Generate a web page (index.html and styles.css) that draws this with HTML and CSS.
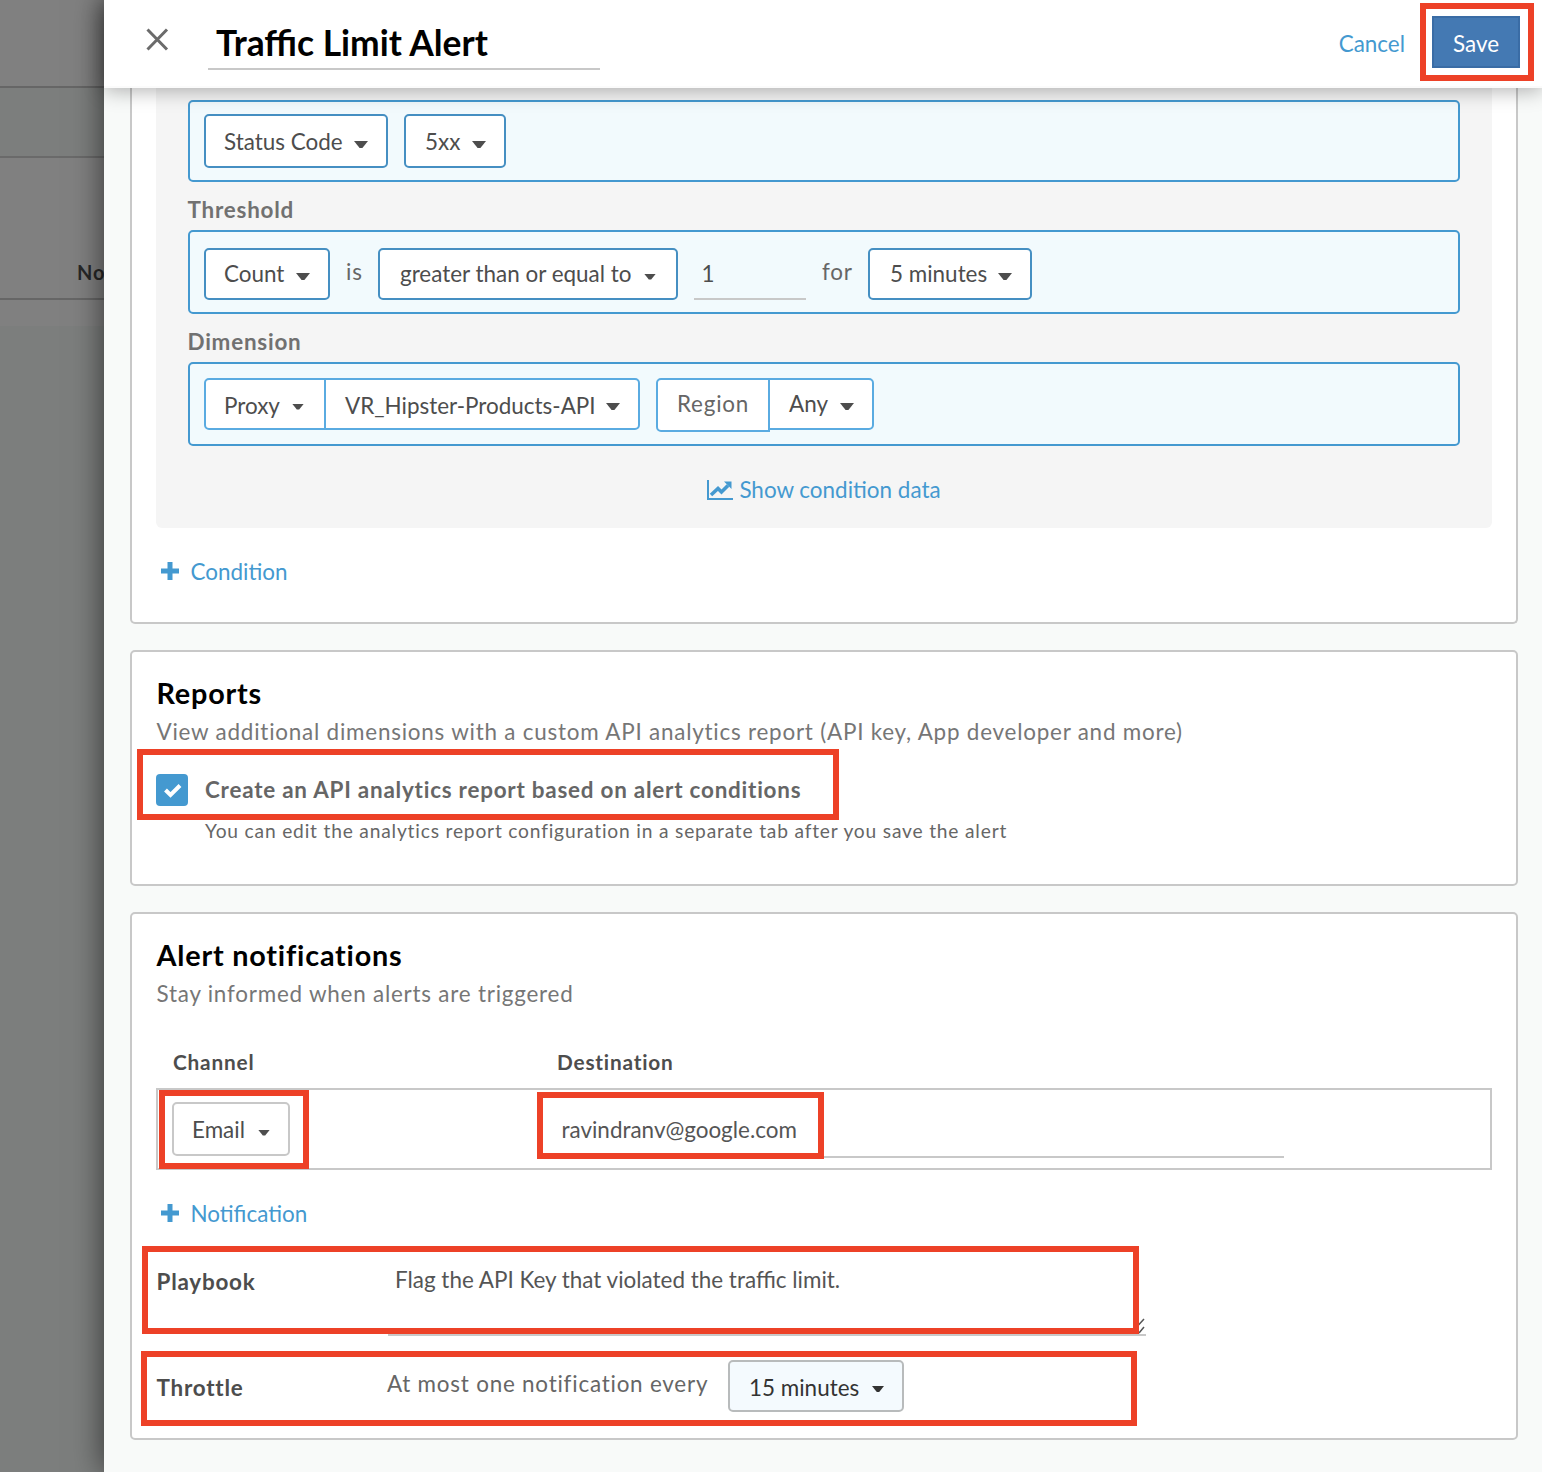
FILE: index.html
```html
<!DOCTYPE html>
<html lang="en">
<head>
<meta charset="utf-8">
<title>Traffic Limit Alert</title>
<link rel="stylesheet" href="styles.css">
</head>
<body>
<div class="app">
  <aside class="backdrop">
    <div class="backdrop-top"></div>
    <div class="backdrop-bar"></div>
    <div class="backdrop-head">No</div>
    <div class="backdrop-row"></div>
  </aside>
  <main class="panel">
    <header class="header">
      <svg class="close" viewBox="0 0 24 26"><path d="M2.500 3.500 22 23.500M22 3.500 2.500 23.500"/></svg>
      <div class="title">Traffic Limit Alert</div>
      <a class="cancel">Cancel</a>
      <button class="save">Save</button>
    </header>
    <div class="content">
      <section class="card conditions">
        <div class="condition">
          <div class="field field-metric">
            <div class="select w-status">Status Code<i class="caret"></i></div>
            <div class="select w-code">5xx<i class="caret"></i></div>
          </div>
          <div class="label">Threshold</div>
          <div class="field">
            <div class="select w-count">Count<i class="caret"></i></div>
            <span class="word w-is">is</span>
            <div class="select w-compare">greater than or equal to<i class="caret small"></i></div>
            <div class="number">1</div>
            <span class="word w-for">for</span>
            <div class="select w-duration">5 minutes<i class="caret"></i></div>
          </div>
          <div class="label">Dimension</div>
          <div class="field field-dimension">
            <div class="group">
              <div class="select w-proxy low">Proxy<i class="caret small"></i></div>
              <div class="select w-name low">VR_Hipster-Products-API<i class="caret"></i></div>
            </div>
            <div class="group">
              <div class="select region">Region</div>
              <div class="select w-any">Any<i class="caret"></i></div>
            </div>
          </div>
          <a class="show-data">
            <svg class="chart" viewBox="0 0 26 20"><path class="axis" d="M1 0V19H26"/><path class="trend" d="M4 15 11 8.500 14.500 12 21 5.500"/><path class="head" d="M17 1.500H24.500V9Z"/></svg>
            <span>Show condition data</span>
          </a>
        </div>
        <a class="add add-condition"><svg class="plus" viewBox="0 0 18 18"><path d="M9 0V18M0 9H18"/></svg>Condition</a>
      </section>

      <section class="card reports">
        <h2>Reports</h2>
        <p class="sub">View additional dimensions with a custom API analytics report (API key, App developer and more)</p>
        <div class="check-row">
          <span class="checkbox"><svg viewBox="0 0 32 32"><path d="M9.500 16 14.500 21 24 11.500"/></svg></span>
          <span>Create an API analytics report based on alert conditions</span>
        </div>
        <p class="hint">You can edit the analytics report configuration in a separate tab after you save the alert</p>
      </section>

      <section class="card alerts">
        <h2>Alert notifications</h2>
        <p class="sub">Stay informed when alerts are triggered</p>
        <div class="table-head"><span>Channel</span><span>Destination</span></div>
        <div class="table-row">
          <div class="select w-email">Email<i class="caret small"></i></div>
          <div class="email">ravindranv@google.com</div>
        </div>
        <a class="add"><svg class="plus" viewBox="0 0 18 18"><path d="M9 0V18M0 9H18"/></svg>Notification</a>
        <div class="form-row playbook">
          <b>Playbook</b>
          <div class="textarea">Flag the API Key that violated the traffic limit.
            <svg class="grip" viewBox="0 0 14 16"><path d="M1 13 12 1M7 15 12 9"/></svg>
          </div>
        </div>
        <div class="form-row throttle">
          <b>Throttle</b>
          <span class="every">At most one notification every</span>
          <div class="select w-throttle">15 minutes<i class="caret small"></i></div>
        </div>
      </section>
    </div>
  </main>
</div>
<div class="mark mark-save"></div>
<div class="mark mark-report"></div>
<div class="mark mark-channel"></div>
<div class="mark mark-email"></div>
<div class="mark mark-playbook"></div>
<div class="mark mark-throttle"></div>
</body>
</html>
```

FILE: styles.css
```css
* { box-sizing: border-box; }
body {
  margin: 0;
  font-family: Lato, "Open Sans", sans-serif;
  font-size: 22.45px;
  line-height: 32px;
  color: #4d4d4d;
  position: relative;
}
h2, p { margin: 0; }
svg { display: block; fill: none; flex: none; }
.app { display: grid; grid-template-columns: 104px 1438px; height: 1472px; overflow: hidden; }

/* dimmed page behind the panel */
.backdrop { background: #7c7e7d; }
.backdrop-top { height: 88px; background: #808080; border-bottom: 2px solid #666; }
.backdrop-bar { height: 70px; border-bottom: 2px solid #6a6a6a; }
.backdrop-head {
  height: 142px; padding: 98px 0 0 77px; background: #808080; border-bottom: 2px solid #666;
  color: #272727; font-weight: 700; font-size: 20px; letter-spacing: 1px;
}
.backdrop-row { height: 26px; background: #808080; }

.panel { background: #f8faf9; box-shadow: 0 0 30px rgba(0,0,0,.6); position: relative; min-width: 0; }
.header {
  height: 88px; display: flex; align-items: flex-start; background: #fff;
  border-bottom: 2px solid #fbfbfb; box-shadow: 0 2px 20px rgba(0,0,0,.33); position: relative; z-index: 1;
}
.close { width: 24px; height: 26px; margin: 26px 0 0 41px; stroke: #6b6b6b; stroke-width: 3; }
.title {
  width: 392px; height: 56px; margin: 14px 0 0 39px; padding: 1px 0 0 8px; line-height: 56px;
  border-bottom: 2px solid #c8c8c8; color: #000; font-weight: 700; font-size: 35.4px;
}
.cancel { margin: 28px 27px 0 auto; color: #4499d0; }
.save {
  width: 88px; height: 52px; margin: 16px 22px 0 0; padding: 4px 0 0; font: inherit; color: #fff;
  background: #4479b3; border: 2px solid #3a6ca5;
}

.content { padding: 0 24px 0 26px; display: flex; flex-direction: column; gap: 26px; }
.card { background: #fff; border: 2px solid #c8c8c8; border-radius: 5px; padding: 23px 24px 0; }
.conditions { height: 536px; padding-top: 0; border-top: 0; border-radius: 0 0 5px 5px; }
.reports { height: 236px; }
.alerts { height: 528px; }

.condition { height: 440px; padding: 12px 32px 0; background: #f5f5f5; border-radius: 0 0 6px 6px; }
.field {
  height: 84px; padding: 16px 14px 0; display: flex; gap: 16px; align-items: flex-start;
  border: 2px solid #4499d0; border-radius: 5px; background: #f2fafd;
}
.field-metric { height: 82px; padding-top: 12px; }
.field-dimension { padding-top: 14px; }
.label { margin: 12px 0 4px; color: #717171; font-weight: 700; letter-spacing: .77px; text-indent: -.5px; }

.select {
  height: 52px; padding: 0 18px; display: flex; align-items: center; justify-content: space-between;
  border: 2px solid #458fc2; border-radius: 5px; background: #fff; white-space: nowrap; flex: none;
}
.field-metric .select { height: 54px; padding-top: 2px; }
.field-metric .caret { margin-top: 5px; }
.caret { width: 14px; height: 7px; margin-top: 5px; background: #4d4d4d; clip-path: polygon(0 0, 100% 0, 60% 100%, 40% 100%); }
.caret.small { width: 12px; margin-right: 2px; height: 6px; }
.w-status { width: 184px; }
.w-code { width: 102px; }
.field-metric .w-code, .w-duration, .region, .w-any, .w-name { padding-left: 19px; }
.w-count { width: 126px; }
.select.w-compare { width: 300px; padding-left: 20px; }
.select.w-duration { width: 164px; padding-left: 20px; }
.w-proxy { width: 122px; border-radius: 5px 0 0 5px; }
.w-name { width: 316px; margin-left: -2px; border-radius: 0 5px 5px 0; }
.region { width: 114px; height: 54px; color: #666; letter-spacing: .77px; border-radius: 5px 0 0 5px; padding-bottom: 2px; }
.w-any { width: 106px; margin-left: -2px; border-radius: 0 5px 5px 0; }
.low { padding-top: 3px; }
.low .caret { margin-top: 2px; }
.group { display: flex; align-items: flex-start; }
.group .select { border-color: #5aabe1; }
.word { height: 52px; line-height: 48px; color: #666; letter-spacing: .77px; }
.w-is { width: 16px; }
.w-for { width: 30px; }
.number { width: 112px; height: 52px; padding-left: 7.5px; line-height: 52px; border-bottom: 2px solid #c8c8c8; }

.show-data { margin-top: 28px; display: flex; justify-content: center; gap: 6px; color: #4499d0; }
.chart { width: 26px; height: 20px; margin-top: 6px; }
.axis { stroke: #4499d0; stroke-width: 2; }
.trend { stroke: #4499d0; stroke-width: 3.6; }
.head { fill: #4499d0; }
.add { display: flex; margin-top: 28px; padding-left: 5px; color: #4499d0; }
.plus { width: 18px; height: 18px; margin: 6px 11.5px 0 0; stroke: #4499d0; stroke-width: 5; }

h2 { padding-left: .5px; color: #000; font-size: 28.8px; line-height: 36px; font-weight: 700; letter-spacing: .8px; }
.sub { margin-top: 5px; padding-left: .5px; color: #767676; letter-spacing: .77px; }
.check-row { margin-top: 26px; display: flex; gap: 17px; font-weight: 700; letter-spacing: .77px; color: #666; }
.checkbox { width: 32px; height: 32px; border-radius: 4px; background: #4499d0; }
.checkbox path { stroke: #fff; stroke-width: 4; }
.hint { margin: 11px 0 0 49px; color: #666; font-size: 19.2px; line-height: 28px; letter-spacing: .81px; }

.table-head { margin-top: 38px; padding-left: 17px; display: grid; grid-template-columns: 384px 1fr; font-weight: 700; font-size: 20.8px; line-height: 28px; letter-spacing: .8px; }
.table-row { height: 82px; margin: 12px 0 28px; padding: 12px 14px 0; display: flex; border: 2px solid #c8c8c8; }
.table-row .select { height: 54px; padding-top: 2px; padding-right: 16px; border-color: #c8c8c8; }
.w-email { width: 118px; }
.email { width: 728px; height: 56px; margin-left: 266px; padding-left: 5.5px; line-height: 55px; border-bottom: 2px solid #c8c8c8; color: #555; }
.alerts .add { margin-top: 0; }
.form-row { display: grid; grid-template-columns: 232px 758px; }
.form-row b { padding-left: .5px; letter-spacing: .77px; }
.playbook { height: 74px; margin-top: 32px; }
.playbook b { padding-top: 4px; }
.textarea { padding: 2px 0 0 7px; border-bottom: 2px solid #c8c8c8; color: #555; position: relative; }
.grip { width: 14px; height: 16px; position: absolute; right: 0; bottom: 0; stroke: #555; stroke-width: 1.5; }
.throttle { margin-top: 24px; grid-template-columns: 231px 341px 176px; }
.throttle b { padding-top: 12px; }
.every { padding-top: 8px; color: #666; letter-spacing: .77px; white-space: nowrap; }
.select.w-throttle { padding: 3px 16px 0 19px; border-color: #b8bbbc; background: #f4fafe; color: #333; }
.w-throttle .caret { background: #333; margin-top: 3px; }

/* highlight frames laid over the form */
.mark { position: absolute; z-index: 2; border: 6px solid #ed4127; }
.mark-save { left: 1420px; top: 3px; width: 114px; height: 78px; }
.mark-report { left: 137px; top: 749px; width: 702px; height: 71px; }
.mark-channel { left: 159px; top: 1090px; width: 150px; height: 79px; }
.mark-email { left: 537px; top: 1092px; width: 287px; height: 67px; }
.mark-playbook { left: 142px; top: 1246px; width: 997px; height: 88px; }
.mark-throttle { left: 141px; top: 1351px; width: 996px; height: 75px; }
```
